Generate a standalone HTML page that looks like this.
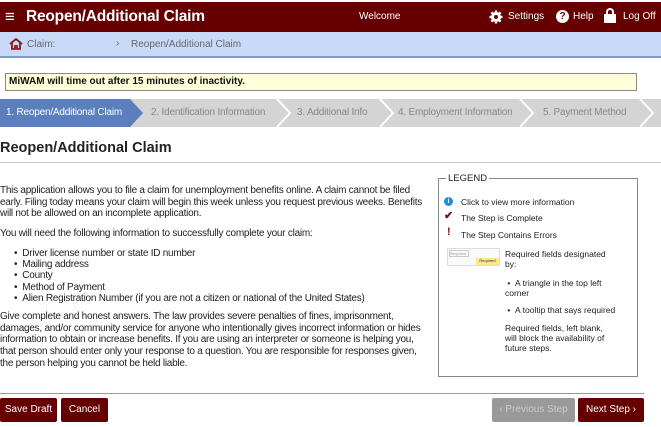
<!DOCTYPE html>
<html><head><meta charset="utf-8"><style>
*{margin:0;padding:0;box-sizing:border-box}
body{width:661px;height:427px;overflow:hidden;background:#fff;font-family:"Liberation Sans",Arial,sans-serif;position:relative;color:#222}
.a{position:absolute}
.hdr{left:0;top:2px;width:661px;height:30px;background:#660000;color:#fff}
.bc{left:0;top:32px;width:661px;height:26px;background:#c9daf8;border-bottom:2px solid #7d9ad2;font-size:10px;color:#666}
.alert{left:5px;top:73px;width:632px;height:18px;background:#fefed8;border:1px solid #888;font-size:10px;font-weight:bold;padding:2px 3px;color:#111}
.steps{left:0;top:99px;width:661px;height:28px;background:#d4d4d4}
.step{position:absolute;top:0;height:28px;line-height:28px;font-size:10px;color:#888;letter-spacing:-0.2px}
.p{font-size:10px;line-height:11.7px;color:#222;letter-spacing:-0.25px}
.btn{position:absolute;top:398px;height:24px;background:#660000;color:#fff;font-size:10px;line-height:24px;text-align:center;border-radius:2px}
.lg{font-size:8.5px;color:#222}
</style></head><body>
<div class="a hdr">
 <div class="a" style="left:5px;top:5px;font-size:17px;">&#8801;</div>
 <div class="a" style="left:26px;top:6px;font-size:15.5px;font-weight:bold;letter-spacing:-0.2px">Reopen/Additional Claim</div>
 <div class="a" style="left:359px;top:9px;font-size:10px">Welcome</div>
 <svg class="a" style="left:489px;top:8px" width="14" height="14" viewBox="0 0 14 14"><circle cx="7" cy="7" r="5" fill="#fff"/><g stroke="#fff" stroke-width="2.4"><line x1="7" y1="0.5" x2="7" y2="13.5"/><line x1="0.5" y1="7" x2="13.5" y2="7"/><line x1="2.4" y1="2.4" x2="11.6" y2="11.6"/><line x1="11.6" y1="2.4" x2="2.4" y2="11.6"/></g><circle cx="7" cy="7" r="2" fill="#660000"/></svg>
 <div class="a" style="left:508px;top:9px;font-size:10px">Settings</div>
 <div class="a" style="left:556px;top:8px;width:13px;height:13px;border-radius:50%;background:#fff;color:#660000;font-size:10px;font-weight:bold;text-align:center;line-height:13px">?</div>
 <div class="a" style="left:573px;top:9px;font-size:10px">Help</div>
 <div class="a" style="left:606px;top:6px;width:8px;height:6px;border:2px solid #fff;border-bottom:none;border-radius:4px 4px 0 0"></div>
 <div class="a" style="left:604px;top:12px;width:12px;height:9px;background:#fff"></div>
 <div class="a" style="left:623px;top:9px;font-size:10px">Log Off</div>
</div>
<div class="a bc">
 <svg class="a" style="left:9px;top:6px" width="14" height="12" viewBox="0 0 14 12"><path d="M1 6L7 1l6 5M3 5v6h3V8h2v3h3V5" fill="none" stroke="#8b1a1a" stroke-width="1.8"/></svg>
 <div class="a" style="left:27px;top:7px">Claim:</div>
 <div class="a" style="left:116px;top:6px">›</div>
 <div class="a" style="left:131px;top:7px">Reopen/Additional Claim</div>
</div>
<div class="a alert">MiWAM will time out after 15 minutes of inactivity.</div>
<div class="a steps">
 <svg class="a" style="left:0;top:0" width="661" height="28"><path d="M0 0H130L143 14L130 28H0Z" fill="#5b7fbd"/>
 <g fill="none" stroke="#fff" stroke-width="2"><path d="M277 0L290 14L277 28"/><path d="M380 0L393 14L380 28"/><path d="M520 0L533 14L520 28"/><path d="M640 0L653 14L640 28"/></g></svg>
 <div class="step" style="left:6px;color:#fff">1. Reopen/Additional Claim</div>
 <div class="step" style="left:151px">2. Identification Information</div>
 <div class="step" style="left:297px">3. Additional Info</div>
 <div class="step" style="left:398px">4. Employment Information</div>
 <div class="step" style="left:543px">5. Payment Method</div>
</div>
<div class="a" style="left:0;top:140px;font-size:14.5px;font-weight:bold;color:#222">Reopen/Additional Claim</div>
<div class="a" style="left:0;top:162px;width:661px;height:1px;background:#ccc"></div>
<div class="a p" style="left:0;top:185px;width:432px">This application allows you to file a claim for unemployment benefits online. A claim cannot be filed early. Filing today means your claim will begin this week unless you request previous weeks. Benefits will not be allowed on an incomplete application.</div>
<div class="a p" style="left:0;top:228px">You will need the following information to successfully complete your claim:</div>
<div class="a p" style="left:14px;top:248px;line-height:11.2px">• &nbsp;Driver license number or state ID number<br>• &nbsp;Mailing address<br>• &nbsp;County<br>• &nbsp;Method of Payment<br>• &nbsp;Alien Registration Number (if you are not a citizen or national of the United States)</div>
<div class="a p" style="left:0;top:311px;width:427px">Give complete and honest answers. The law provides severe penalties of fines, imprisonment, damages, and/or community service for anyone who intentionally gives incorrect information or hides information to obtain or increase benefits. If you are using an interpreter or someone is helping you, that person should enter only your response to a question. You are responsible for responses given, the person helping you cannot be held liable.</div>
<div class="a" style="left:438px;top:178px;width:200px;height:199px;border:1px solid #888"></div>
<div class="a" style="left:446px;top:173px;background:#fff;padding:0 2px;font-size:9.5px;color:#222">LEGEND</div>
<div class="a" style="left:444px;top:197px;width:9px;height:9px;border-radius:50%;background:#1a8fe0;color:#fff;font-size:7px;font-weight:bold;text-align:center;line-height:9px">i</div>
<div class="a lg" style="left:461px;top:197px">Click to view more information</div>
<div class="a" style="left:444px;top:209px;color:#7a1010;font-size:11px;font-weight:bold">✔</div>
<div class="a lg" style="left:461px;top:213px">The Step is Complete</div>
<div class="a" style="left:447px;top:226px;color:#8b1010;font-size:11px;font-weight:bold">!</div>
<div class="a lg" style="left:461px;top:230px">The Step Contains Errors</div>
<div class="a" style="left:447px;top:248px;width:53px;height:18px;border:1px solid #ddd;background:#fafafa"></div>
<div class="a" style="left:449px;top:250px;width:20px;height:7px;border:1px solid #ccc;font-size:4px;color:#999">Required</div>
<div class="a" style="left:476px;top:258px;width:23px;height:7px;background:#fbe88a;font-size:4px;color:#333;text-align:center">Required</div>
<div class="a lg" style="left:505px;top:249px;line-height:10px">Required fields designated<br>by:</div>
<div class="a lg" style="left:505px;top:278px;line-height:10px">&nbsp;• &nbsp;A triangle in the top left<br>corner</div>
<div class="a lg" style="left:505px;top:305px">&nbsp;• &nbsp;A tooltip that says required</div>
<div class="a lg" style="left:505px;top:323px;line-height:10px">Required fields, left blank,<br>will block the availability of<br>future steps.</div>
<div class="a" style="left:0;top:393px;width:644px;height:1px;background:#7d9ad2"></div>
<div class="btn" style="left:0;width:57px">Save Draft</div>
<div class="btn" style="left:61px;width:47px">Cancel</div>
<div class="btn" style="left:492px;width:83px;background:#999;color:#ccc">‹ Previous Step</div>
<div class="btn" style="left:578px;width:66px">Next Step ›</div>
</body></html>
